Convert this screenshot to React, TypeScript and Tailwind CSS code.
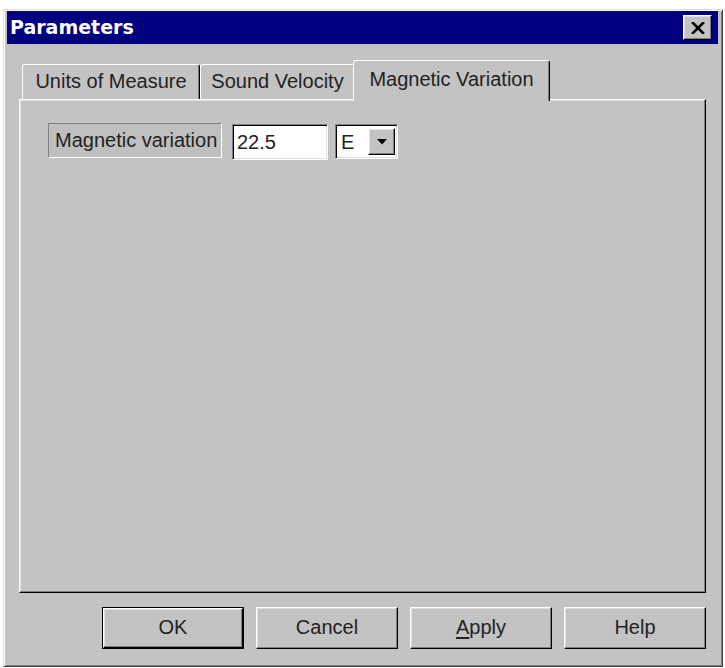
import React from 'react';

const raised =
  'border border-t-white border-l-white border-r-black border-b-black shadow-[inset_-1px_-1px_0_#808080,inset_1px_1px_0_#dfdfdf]';
const sunken =
  'border border-t-[#808080] border-l-[#808080] border-r-white border-b-white shadow-[inset_1px_1px_0_#000,inset_-1px_-1px_0_#dfdfdf]';

function Tab({ label, width, active }: { label: string; width: number; active?: boolean }) {
  if (active) {
    return (
      <div
        className="relative z-10 -mb-[2px] -ml-[2px] h-[41px] shrink-0 rounded-t-[3px] border-l border-t border-r border-l-white border-t-white border-r-black bg-[#c3c3c3] pt-[8px] text-center shadow-[inset_-1px_0_0_#808080]"
        style={{ width }}
      >
        {label}
      </div>
    );
  }
  return (
    <div
      className="h-[35px] shrink-0 rounded-t-[3px] border-l border-t border-r border-l-white border-t-white border-r-black bg-[#c3c3c3] pt-[6px] text-center shadow-[inset_-1px_0_0_#808080]"
      style={{ width }}
    >
      {label}
    </div>
  );
}

function Button({ children, isDefault }: { children: React.ReactNode; isDefault?: boolean }) {
  if (isDefault) {
    return (
      <div className="h-[42px] w-[142px] border border-black">
        <div className={`flex h-full w-full items-center justify-center pb-[2px] ${raised}`}>{children}</div>
      </div>
    );
  }
  return (
    <div className={`flex h-[42px] w-[142px] items-center justify-center pb-[2px] ${raised}`}>{children}</div>
  );
}

export default function App() {
  return (
    <div
      className="h-[668px] w-[725px] overflow-hidden bg-white pt-[9px] text-[20px] leading-[20px] text-[#222]"
      style={{ fontFamily: '"Liberation Sans", Arial, sans-serif' }}
    >
      <div className="ml-[3px] flex h-[658px] w-[720px] flex-col border border-t-[#dfdfdf] border-l-[#dfdfdf] border-r-[#404040] border-b-[#404040] bg-[#c3c3c3] pl-[3px] pr-[4px] pt-[1px] shadow-[inset_1px_1px_0_#fff,inset_-1px_-1px_0_#808080]">
        {/* title bar */}
        <div className="flex h-[33px] items-center justify-between bg-[#000080] pl-[3px] pr-[6px]">
          <span
            className="text-[19px] font-bold leading-[33px] text-white"
            style={{ fontFamily: '"DejaVu Sans", Verdana, sans-serif' }}
          >
            Parameters
          </span>
          <div className={`flex h-[25px] w-[29px] items-center justify-center bg-[#c3c3c3] ${raised}`}>
            <svg width="14" height="12" viewBox="0 0 14 12">
              <path d="M2 1 L12 11 M12 1 L2 11" stroke="#000" strokeWidth="2.6" strokeLinecap="square" />
            </svg>
          </div>
        </div>

        <div className="flex flex-1 flex-col px-[12px] pt-[16px]">
          {/* tabs */}
          <div className="flex h-[39px] items-end pl-[3px]">
            <Tab label="Units of Measure" width={178} />
            <Tab label="Sound Velocity" width={155} />
            <Tab label="Magnetic Variation" width={197} active />
          </div>

          {/* panel */}
          <div className="h-[494px] border border-t-white border-l-white border-r-black border-b-black pl-[28px] pt-[23px] shadow-[inset_-1px_-1px_0_#808080,inset_1px_1px_0_#dfdfdf]">
            <div className="flex items-start">
              <div className="h-[35px] w-[174px] border border-t-[#808080] border-l-[#808080] border-r-white border-b-white bg-[#bfbfbf] pl-[6px] pt-[6px]">
                Magnetic variation
              </div>
              <div className={`ml-[10px] mt-[1px] flex h-[36px] w-[96px] items-center bg-white pl-[4px] ${sunken}`}>
                22.5
              </div>
              <div className={`ml-[7px] mt-[1px] flex h-[35px] w-[63px] items-center bg-white pl-[5px] ${sunken}`}>
                <span className="flex-1">E</span>
                <div className={`mr-[2px] flex h-[27px] w-[27px] items-center justify-center bg-[#c3c3c3] ${raised}`}>
                  <svg width="10" height="6" viewBox="0 0 10 6">
                    <path d="M0 0 H10 L5 5.5 Z" fill="#000" />
                  </svg>
                </div>
              </div>
            </div>
          </div>

          {/* buttons */}
          <div className="mt-[14px] flex justify-end gap-[12px]">
            <Button isDefault>OK</Button>
            <Button>Cancel</Button>
            <Button>
              <span>
                <span className="underline underline-offset-[3px]">A</span>pply
              </span>
            </Button>
            <Button>Help</Button>
          </div>
        </div>
      </div>
    </div>
  );
}
